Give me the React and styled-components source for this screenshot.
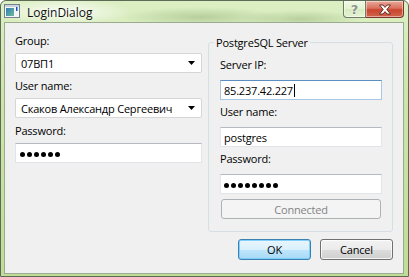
import React from "react";
import styled, { createGlobalStyle } from "styled-components";

const uiFont = `"Open Sans", "Noto Sans", sans-serif`;

const GlobalStyle = createGlobalStyle`
  html, body {
    margin: 0;
    padding: 0;
    background: #ffffff;
  }
  body {
    width: 409px;
    height: 277px;
    overflow: hidden;
  }
`;

const Window = styled.div`
  width: 409px;
  height: 277px;
  box-sizing: border-box;
  display: flex;
  flex-direction: column;
  border: 1px solid #5d6b55;
  border-radius: 6px 6px 0 0;
  background:
    radial-gradient(ellipse 70px 13px at 62px 11px, rgba(255, 255, 255, 0.9), rgba(255, 255, 255, 0) 100%),
    radial-gradient(ellipse 80px 10px at 200px 16px, rgba(120, 150, 90, 0.35), rgba(120, 150, 90, 0) 100%),
    radial-gradient(ellipse 60px 9px at 300px 18px, rgba(110, 140, 80, 0.3), rgba(110, 140, 80, 0) 100%),
    linear-gradient(180deg, #dcefc4 0%, #cde5ab 35%, #c0dc98 100%);
  font-family: ${uiFont};
  font-size: 11px;
  letter-spacing: -0.2px;
  color: #000;
`;

const TitleBar = styled.div`
  height: 21px;
  flex: none;
  display: flex;
  align-items: flex-start;
  padding-left: 3px;
`;

const AppIcon = styled.svg`
  margin-top: 3px;
  flex: none;
`;

const Caption = styled.div`
  margin-left: 7px;
  margin-top: 4px;
  line-height: 15px;
  font-size: 12px;
  letter-spacing: 0;
  color: #111;
`;

const CaptionButtons = styled.div`
  margin-left: auto;
  margin-right: 4px;
  display: flex;
`;

const CaptionButton = styled.div`
  width: ${(p) => p.$w}px;
  height: 17px;
  box-sizing: border-box;
  display: flex;
  align-items: center;
  justify-content: center;
  border: 1px solid ${(p) => (p.$close ? "#7a3528" : "#6e7d62")};
  border-top: none;
  border-radius: ${(p) => (p.$close ? "0 0 4px 0" : "0 0 0 4px")};
  border-left: ${(p) => (p.$close ? "none" : "1px solid #6e7d62")};
  background: ${(p) =>
    p.$close
      ? "linear-gradient(180deg, #eaa99b 0%, #d9705c 45%, #c8452f 55%, #d0644a 100%)"
      : "linear-gradient(180deg, rgba(255,255,255,0.55) 0%, rgba(255,255,255,0.25) 50%, rgba(200,220,180,0.2) 51%, rgba(255,255,255,0.35) 100%)"};
  box-shadow: inset 0 0 0 1px rgba(255, 255, 255, 0.45);
`;

const HelpGlyph = styled.span`
  font-family: "DejaVu Sans", sans-serif;
  font-weight: bold;
  font-size: 13px;
  line-height: 13px;
  color: #8a9488;
  text-shadow: 0 0 1px #fff, 0 0 1px #fff;
`;

const Client = styled.div`
  flex: 1;
  margin: 0 4px 2px 3px;
  background: #f0f0f0;
  border: 1px solid #9aab8f;
  padding: 10px 10px 0 10px;
  display: grid;
  grid-template-columns: 187px 185px;
  column-gap: 6px;
  row-gap: 7px;
  align-content: start;
`;

const FormColumn = styled.div`
  display: flex;
  flex-direction: column;
  gap: ${(p) => p.$gap}px;
`;

const Pair = styled.div`
  display: flex;
  flex-direction: column;
  gap: ${(p) => p.$gap}px;
`;

const Label = styled.div`
  height: 15px;
  line-height: 15px;
`;

const ComboBox = styled.div`
  height: 20px;
  box-sizing: border-box;
  display: flex;
  align-items: center;
  padding: 0 6px 0 5px;
  background: #ffffff;
  border: 1px solid #d6d6d6;
  border-radius: 2px;
  line-height: 15px;
`;

const ComboText = styled.span`
  flex: 1;
  white-space: nowrap;
  overflow: hidden;
`;

const TextBox = styled.div`
  height: 20px;
  box-sizing: border-box;
  display: flex;
  align-items: center;
  padding-left: ${(p) => p.$pad}px;
  background: #ffffff;
  border: 1px solid ${(p) => (p.$focus ? "#a9c6e4" : "#e1e5ea")};
  border-top-color: ${(p) => (p.$focus ? "#5b8fc2" : "#b5b9c0")};
  line-height: 15px;
  white-space: nowrap;
`;

const Caret = styled.span`
  display: inline-block;
  width: 1px;
  height: 13px;
  margin-left: 1px;
  background: #000;
`;

const Dots = styled.div`
  display: flex;
  gap: 2px;
  margin-top: 2px;
`;

const Dot = styled.span`
  width: 5px;
  height: 5px;
  border-radius: 50%;
  background: #000;
`;

const GroupBox = styled.fieldset`
  margin: 2px 0 0 0;
  padding: 7px 10px 12px 11px;
  border: 1px solid #d5dfe5;
  border-radius: 3px;
  min-width: 0;
  display: flex;
  flex-direction: column;
  gap: 4px;
`;

const GroupTitle = styled.legend`
  margin-left: -6px;
  padding: 0 2px;
  line-height: 15px;
`;

const PushButton = styled.button`
  width: ${(p) => (p.$wide ? "auto" : "73px")};
  height: ${(p) => p.$h || 21}px;
  margin: ${(p) => (p.$wide ? "1px 1px 0 1px" : "0")};
  box-sizing: border-box;
  padding: 0;
  font-family: ${uiFont};
  font-size: 11px;
  letter-spacing: -0.2px;
  line-height: 15px;
  color: ${(p) => (p.disabled ? "#838383" : "#000")};
  border-radius: 3px;
  border: 1px solid ${(p) => (p.disabled ? "#adb2b5" : p.$default ? "#3c7fb1" : "#707070")};
  background: ${(p) =>
    p.disabled
      ? "#f4f4f4"
      : p.$default
      ? "linear-gradient(180deg, #eaf6fd 0%, #d9f0fc 50%, #bee6fd 51%, #a7d9f5 100%)"
      : "linear-gradient(180deg, #f2f2f2 0%, #ebebeb 50%, #dddddd 51%, #cfcfcf 100%)"};
  box-shadow: ${(p) =>
    p.disabled
      ? "none"
      : p.$default
      ? "inset 0 0 0 1px rgba(120, 205, 250, 0.9)"
      : "inset 0 0 0 1px rgba(255, 255, 255, 0.75)"};
`;

const ButtonRow = styled.div`
  grid-column: 1 / -1;
  display: flex;
  justify-content: flex-end;
  gap: 9px;
`;

const Arrow = () => (
  <svg width="7" height="4" viewBox="0 0 7 4">
    <path d="M0 0H7L3.5 4Z" fill="#000" />
  </svg>
);

const Mask = ({ count }) => (
  <Dots>
    {Array.from({ length: count }, (_, i) => (
      <Dot key={i} />
    ))}
  </Dots>
);

export default function App() {
  return (
    <>
      <GlobalStyle />
      <Window>
        <TitleBar>
          <AppIcon width="16" height="14" viewBox="0 0 16 14">
            <defs>
              <linearGradient id="ico" x1="0" y1="0" x2="1" y2="1">
                <stop offset="0" stopColor="#2f7fb8" />
                <stop offset="1" stopColor="#6cb99a" />
              </linearGradient>
            </defs>
            <rect x="0.5" y="0.5" width="15" height="13" fill="#f3f5f7" stroke="#76818c" />
            <rect x="1" y="1" width="14" height="2" fill="#c9d3dc" />
            <rect x="2" y="4" width="8" height="8" fill="url(#ico)" />
            <rect x="12" y="3" width="1.5" height="4" fill="#1d4fc4" />
          </AppIcon>
          <Caption>LoginDialog</Caption>
          <CaptionButtons>
            <CaptionButton $w={23}>
              <HelpGlyph>?</HelpGlyph>
            </CaptionButton>
            <CaptionButton $w={38} $close>
              <svg width="14" height="11" viewBox="0 0 14 11">
                <path
                  d="M1.5 1H5L7 3.4L9 1H12.5L8.8 5.5L12.5 10H9L7 7.6L5 10H1.5L5.2 5.5Z"
                  fill="#ffffff"
                  stroke="#5a2219"
                  strokeWidth="0.9"
                  strokeLinejoin="round"
                />
              </svg>
            </CaptionButton>
          </CaptionButtons>
        </TitleBar>

        <Client>
          <FormColumn $gap={5}>
            <Pair $gap={5}>
              <Label>Group:</Label>
              <ComboBox>
                <ComboText>07ВП1</ComboText>
                <Arrow />
              </ComboBox>
            </Pair>
            <Pair $gap={5}>
              <Label>User name:</Label>
              <ComboBox>
                <ComboText>Скаков Александр Сергеевич</ComboText>
                <Arrow />
              </ComboBox>
            </Pair>
            <Pair $gap={5}>
              <Label>Password:</Label>
              <TextBox $pad={4}>
                <Mask count={6} />
              </TextBox>
            </Pair>
          </FormColumn>

          <GroupBox>
            <GroupTitle>PostgreSQL Server</GroupTitle>
            <Pair $gap={8}>
              <Label>Server IP:</Label>
              <TextBox $pad={3} $focus>
                85.237.42.227
                <Caret />
              </TextBox>
            </Pair>
            <Pair $gap={8}>
              <Label>User name:</Label>
              <TextBox $pad={3}>postgres</TextBox>
            </Pair>
            <Pair $gap={8}>
              <Label>Password:</Label>
              <TextBox $pad={3}>
                <Mask count={8} />
              </TextBox>
            </Pair>
            <PushButton $wide $h={20} disabled>
              Connected
            </PushButton>
          </GroupBox>

          <ButtonRow>
            <PushButton $default>OK</PushButton>
            <PushButton>Cancel</PushButton>
          </ButtonRow>
        </Client>
      </Window>
    </>
  );
}
